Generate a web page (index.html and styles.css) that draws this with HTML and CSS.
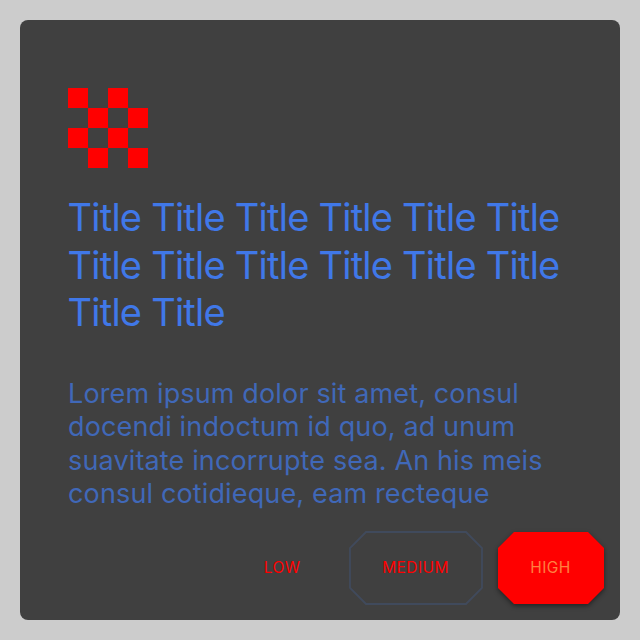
FILE: index.html
```html
<!DOCTYPE html>
<html lang="en">
<head>
<meta charset="utf-8">
<title>Dialog</title>
<link rel="stylesheet" href="styles.css">
</head>
<body>
<main class="dialog">
  <svg class="icon" viewBox="0 0 4 4" shape-rendering="crispEdges" aria-hidden="true"><path d="M0 0h1v1H0zM2 0h1v1H2zM1 1h1v1H1zM3 1h1v1H3zM0 2h1v1H0zM2 2h1v1H2zM1 3h1v1H1zM3 3h1v1H3z"/></svg>
  <h1 class="title">Title Title Title Title Title Title<br>Title Title Title Title Title Title<br>Title Title</h1>
  <p class="message">Lorem ipsum dolor sit amet, consul<br>docendi indoctum id quo, ad unum<br>suavitate incorrupte sea. An his meis<br>consul cotidieque, eam recteque</p>
  <div class="actions">
    <button class="button low"><span class="label">LOW</span></button>
    <button class="button medium"><svg class="shape" viewBox="0 0 134 74" aria-hidden="true"><path d="M17 1H117L133 17V57L117 73H17L1 57V17Z"/></svg><span class="label">MEDIUM</span></button>
    <button class="button high"><svg class="shape" viewBox="0 0 106 72" aria-hidden="true"><path d="M16 0H90L106 16V56L90 72H16L0 56V16Z"/></svg><span class="label">HIGH</span></button>
  </div>
</main>
</body>
</html>
```
FILE: styles.css
```css
* { box-sizing: border-box; }
body { margin: 0; padding: 20px; height: 640px; background: #ccc; font-family: Inter, sans-serif; }
.dialog { display: flex; flex-direction: column; height: 600px; padding: 68px 16px 15px 48px; background: #404040; border-radius: 8px; }
.icon { width: 80px; height: 80px; fill: #f00; flex: none; }
.title { margin: 26px 0 0 -0.5px; font-size: 38px; line-height: 47.5px; font-weight: 400; letter-spacing: -.76px; color: #4078e8; white-space: nowrap; }
.message { margin: 40px 0 0; font-size: 27px; line-height: 33.5px; font-weight: 400; letter-spacing: .14px; color: #4068b8; white-space: nowrap; }
.actions { display: flex; justify-content: flex-end; align-items: center; gap: 15px; margin-top: auto; }
.button { position: relative; flex: none; height: 74px; padding: 0 1px 2px 0; border: 0; background: none; font: 400 15.5px Inter, sans-serif; letter-spacing: .4px; color: #f00; }
.low { width: 104px; padding-right: 0; }
.medium { width: 134px; }
.high { width: 106px; height: 72px; color: #ff8040; }
.shape { position: absolute; inset: 0; width: 100%; height: 100%; overflow: visible; }
.label { position: relative; }
.medium .shape { fill: none; stroke: #404a5c; stroke-width: 1.8; }
.high .shape { fill: #f00; filter: drop-shadow(0 2px 2.5px #0007); }
```
